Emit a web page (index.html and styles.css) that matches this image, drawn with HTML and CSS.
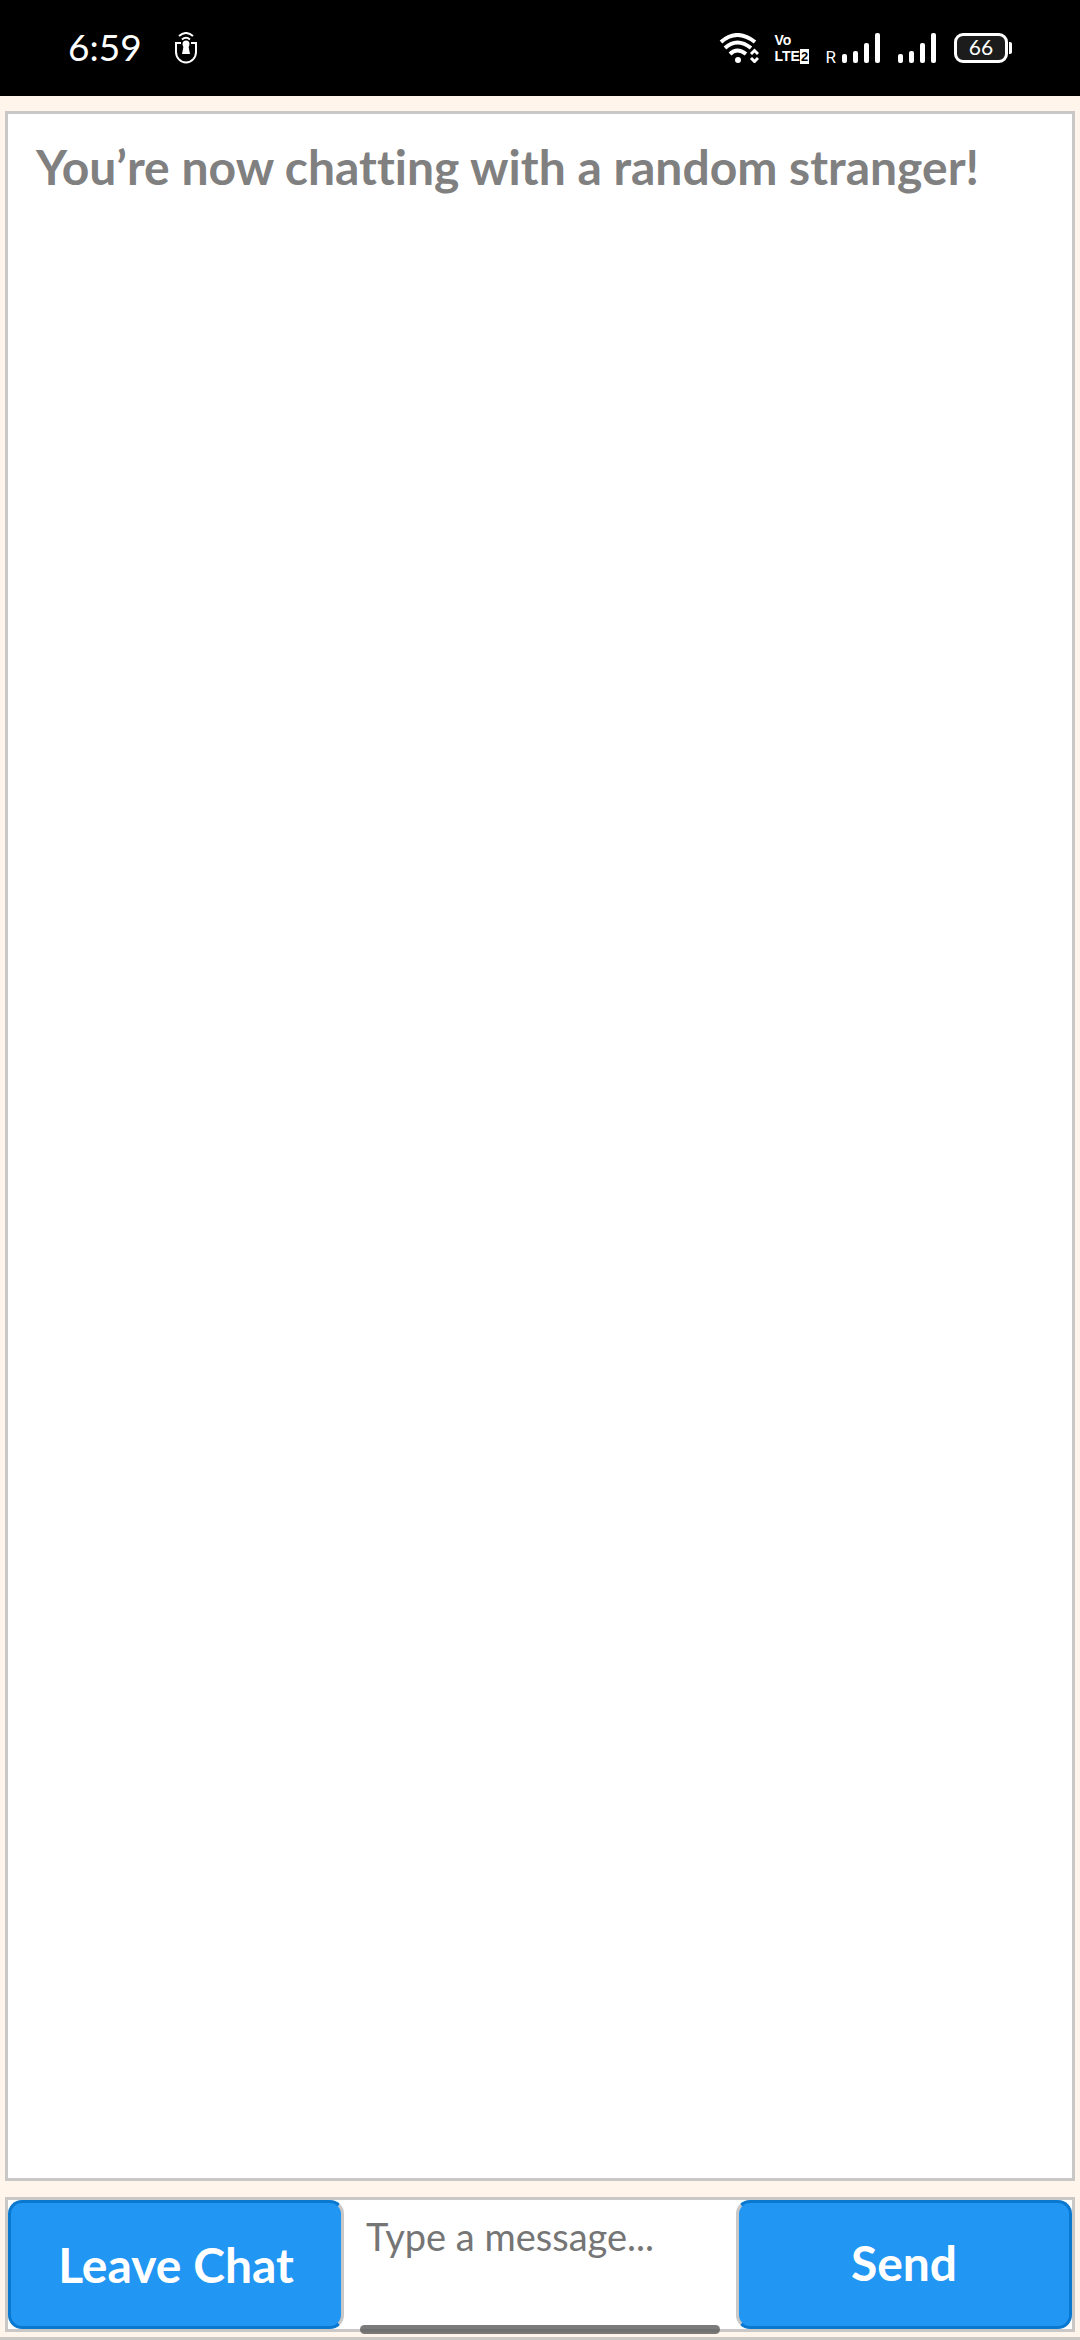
FILE: index.html
```html
<!DOCTYPE html>
<html lang="en">
<head>
  <meta charset="UTF-8">
  <meta name="viewport" content="width=device-width, initial-scale=1.0">
  <title>Chat</title>
  <link rel="stylesheet" href="styles.css">
</head>
<body>
  <header class="statusbar">
    <div class="status-left">
      <span class="clock">6:59</span>
      <!-- hotspot / usb -->
      <svg width="24" height="32" viewBox="0 0 24 32" fill="none" stroke="#fff" stroke-width="2">
        <path d="M5 4Q12 -2 19 4M8 7.500Q12 4 16 7.500"/>
        <path d="M7 11H2V20A10 10.500 0 0 0 22 20V11H17"/>
        <circle cx="12" cy="12" r="3.500" fill="#fff" stroke="none"/>
        <path d="M10 12H14L16 22H8Z" fill="#fff" stroke="none"/>
      </svg>
    </div>
    <div class="status-right">
      <svg class="wifi" width="40" height="30" viewBox="0 0 40 30" fill="none" stroke="#fff" stroke-width="4">
        <path d="M2 9Q18 -5 36 9M6 15Q18 4 32 15M11 21Q18 14 27 21"/>
        <circle cx="19" cy="27" r="3" fill="#fff" stroke="none"/>
        <path d="M32 21L35.500 17.500L39 21M32 25L35.500 28.500L39 25" stroke-width="3"/>
      </svg>
      <div class="volte">
        <span>Vo</span>
        <span>LTE<b>2</b></span>
      </div>
      <span class="roaming">R</span>
      <svg class="signal" width="38" height="30" viewBox="0 0 38 30" fill="#fff">
        <rect x="0" y="21" width="5" height="9" rx="2"/>
        <rect x="11" y="18" width="5" height="12" rx="2"/>
        <rect x="22" y="10" width="5" height="20" rx="2"/>
        <rect x="33" y="0" width="5" height="30" rx="2"/>
      </svg>
      <svg class="signal-2" width="38" height="30" viewBox="0 0 38 30" fill="#fff">
        <rect x="0" y="21" width="5" height="9" rx="2"/>
        <rect x="11" y="18" width="5" height="12" rx="2"/>
        <rect x="22" y="10" width="5" height="20" rx="2"/>
        <rect x="33" y="0" width="5" height="30" rx="2"/>
      </svg>
      <div class="battery">66</div>
      <div class="battery-tip"></div>
    </div>
  </header>

  <main class="chat">
    <div class="log">
      <p class="notice">You’re now chatting with a random stranger!</p>
    </div>
    <form class="controls">
      <button type="button" class="btn btn-leave">Leave Chat</button>
      <textarea class="message" aria-label="Message" placeholder="Type a message..."></textarea>
      <button type="button" class="btn btn-send">Send</button>
    </form>
  </main>

  <div class="home-bar"></div>
</body>
</html>
```
FILE: styles.css
```css
* {
  box-sizing: border-box;
}
body {
  margin: 0;
  height: 100vh;
  display: flex;
  flex-direction: column;
  background: #fff5eb;
  font-family: Lato, sans-serif;
  font-variant-ligatures: none;
  border-bottom: 3px solid #cbc7c4;
}
.statusbar {
  display: flex;
  justify-content: space-between;
  align-items: center;
  height: 96px;
  padding: 0 68px;
  background: #000;
  color: #fff;
}
.status-left,
.status-right {
  display: flex;
  align-items: center;
}
.status-left {
  gap: 32px;
}
.clock {
  font-size: 37px;
  line-height: 44px;
  padding-bottom: 2px;
}
.volte {
  width: 38px;
  margin: 0 13px 0 16px;
  font-family: "Liberation Sans Narrow", "Liberation Sans", sans-serif;
  font-size: 14px;
  font-weight: 700;
  line-height: 16px;
}
.volte span {
  display: flex;
  align-items: center;
}
.volte b {
  padding: 0 1px;
  background: #fff;
  color: #000;
  font-size: 13px;
  line-height: 15px;
}
.roaming {
  align-self: flex-end;
  margin-right: 6px;
  font-family: Roboto, sans-serif;
  font-size: 17px;
  line-height: 14px;
}
.signal-2 {
  margin: 0 18px;
}
.battery {
  width: 54px;
  height: 30px;
  border: 3px solid #fff;
  border-radius: 9px;
  background: #1c1c1c;
  font-size: 21px;
  line-height: 22px;
  text-align: center;
}
.battery-tip {
  width: 3px;
  height: 12px;
  margin-left: 1px;
  border-radius: 0 2px 2px 0;
  background: #fff;
}
.chat {
  flex: 1;
  display: flex;
  flex-direction: column;
  gap: 16px;
  padding: 15px 5px 5px;
}
.log {
  flex: 1;
  padding: 24px 28px;
  border: 3px solid #cac8c7;
  background: #fff;
}
.notice {
  margin: 0;
  color: #808080;
  font-size: 48px;
  font-weight: 700;
  line-height: 58px;
}
.controls {
  display: grid;
  grid-template-columns: 6fr 7fr 6fr;
  height: 135px;
  border: 3px solid #cac8c7;
  background: #fff;
}
.btn {
  padding: 0;
  border: 3px solid #0b78d0;
  border-radius: 14px;
  background: #2196f3;
  color: #fff;
  font-family: inherit;
  font-size: 48px;
  font-weight: 700;
}
.btn-leave {
  border-right-color: #c8c8c8;
}
.btn-send {
  padding-bottom: 4px;
  border-left-color: #c8c8c8;
}
.message {
  min-width: 0;
  padding: 12px 22px;
  border: 0;
  outline: 0;
  resize: none;
  background: transparent;
  color: #333;
  font-family: inherit;
  font-size: 38px;
  line-height: 48px;
}
.message::placeholder {
  color: #757575;
}
.home-bar {
  position: fixed;
  left: 33.333%;
  bottom: 6px;
  width: 33.333%;
  height: 9px;
  border-radius: 5px;
  background: rgba(90, 90, 90, 0.8);
}
```
